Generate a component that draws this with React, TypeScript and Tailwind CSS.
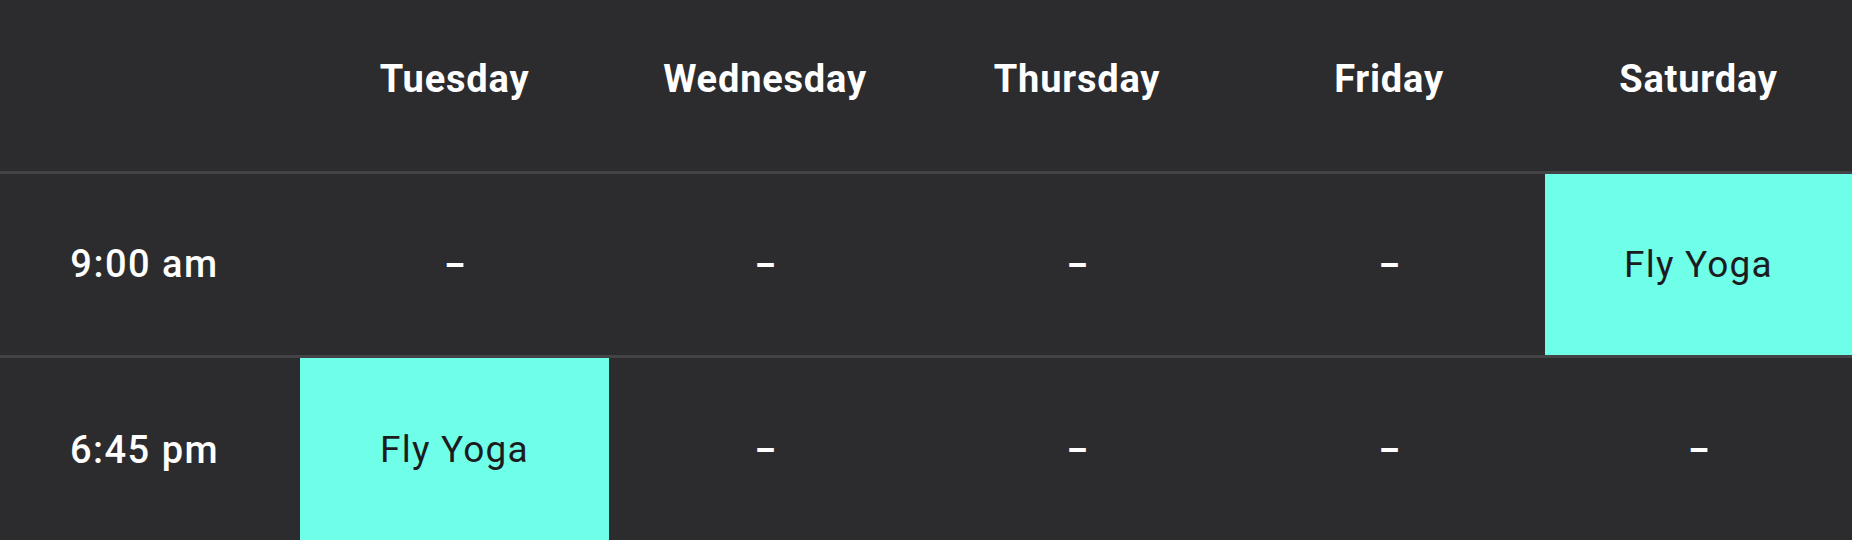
import React from "react";

const days = ["Tuesday", "Wednesday", "Thursday", "Friday", "Saturday"];
const rows: { time: string; cells: (string | null)[] }[] = [
  { time: "9:00 am", cells: [null, null, null, null, "Fly Yoga"] },
  { time: "6:45 pm", cells: ["Fly Yoga", null, null, null, null] },
];

export default function App() {
  return (
    <div
      className="w-[1852px] h-[540px] overflow-hidden bg-[#2c2c2e] text-white"
      style={{ fontFamily: "Roboto, 'Liberation Sans', sans-serif" }}
    >
      <div className="grid grid-cols-[300px_309px_312px_312px_312px_1fr]">
        <div className="h-[171px]" />
        {days.map((d) => (
          <div
            key={d}
            className="h-[171px] flex items-center justify-center pb-[13px] text-[38px] font-bold tracking-[0.8px]"
          >
            {d}
          </div>
        ))}
        {rows.map((r, i) => (
          <React.Fragment key={r.time}>
            <div className="col-span-6 h-[3px] bg-[#434345]" />
            <div
              className={`${i === 0 ? "h-[181px]" : "h-[184px]"} flex items-center justify-center pr-[11px] text-[38px] font-medium tracking-[1.5px]`}
            >
              {r.time}
            </div>
            {r.cells.map((c, j) =>
              c ? (
                <div
                  key={j}
                  className={`${i === 0 ? "h-[181px]" : "h-[184px]"} flex items-center justify-center bg-[#6ffee8] text-[#1c1c1e] text-[37px] font-normal tracking-[1.2px]`}
                >
                  {c}
                </div>
              ) : (
                <div
                  key={j}
                  className={`${i === 0 ? "h-[181px]" : "h-[184px]"} flex items-center justify-center text-[32px] font-black`}
                >
                  –
                </div>
              )
            )}
          </React.Fragment>
        ))}
      </div>
    </div>
  );
}
